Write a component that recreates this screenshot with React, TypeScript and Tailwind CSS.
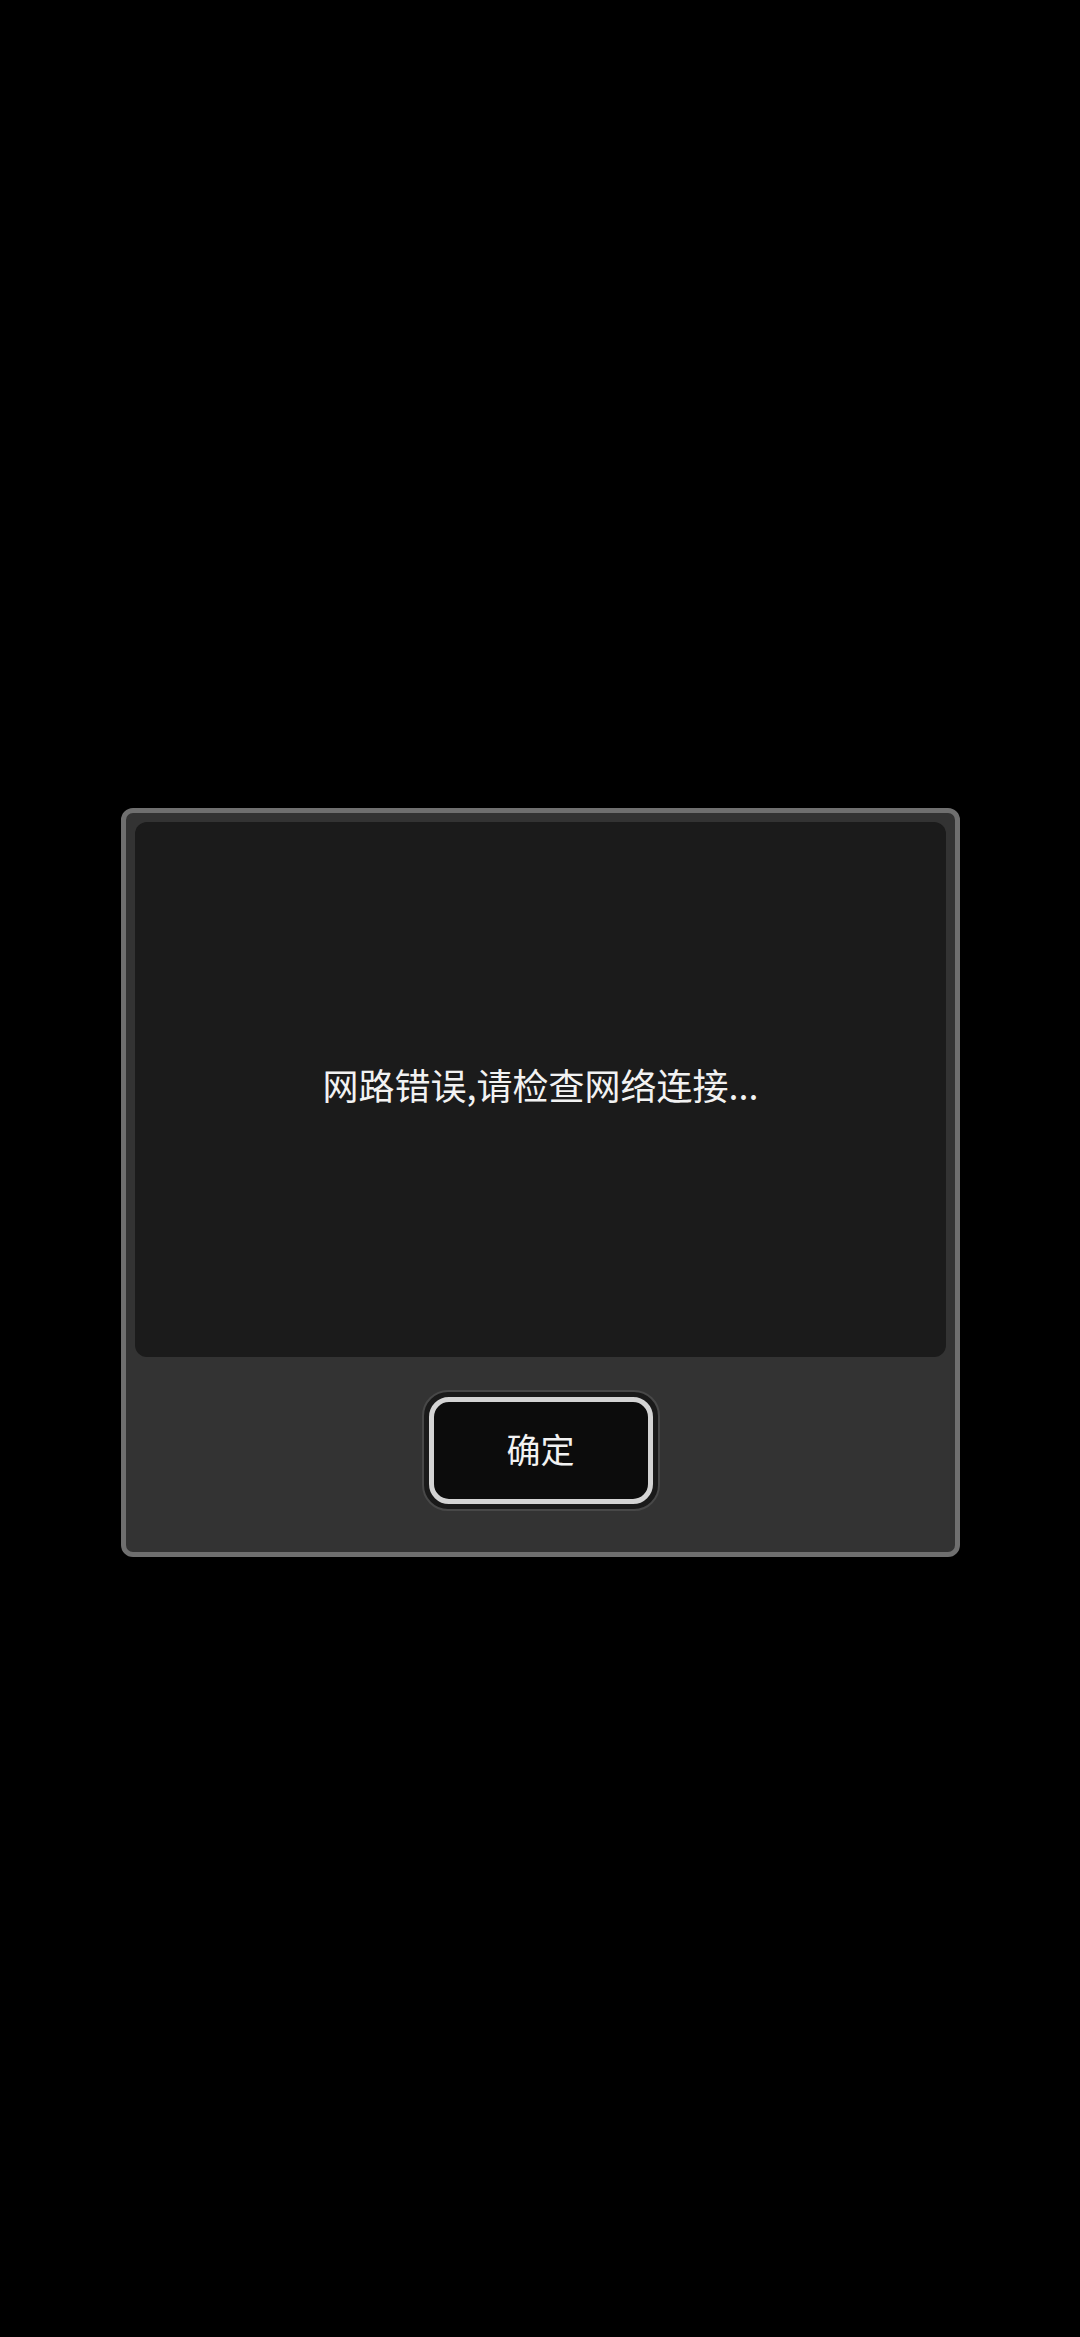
import React from "react";

export default function App() {
  return (
    <div
      className="w-[1080px] h-[2337px] bg-black pt-[808px]"
      style={{ fontFamily: '"Noto Sans CJK SC", "Noto Sans", sans-serif' }}
    >
      <div className="ml-[121px] w-[839px] h-[749px] rounded-[12px] border-[5px] border-[#6f6f6f] bg-[#333333] p-[9px] flex flex-col">
        <div className="h-[535px] rounded-[12px] bg-[#1b1b1b] flex items-center justify-center pb-[11px]">
          <span className="text-[36px] leading-none text-[#f2f2f2]">
            网路错误,请检查网络连接...
          </span>
        </div>
        <div className="flex-1 flex items-center justify-center">
          <div className="w-[238px] h-[121px] rounded-[26px] bg-[#1a1a1a] border-[2px] border-[#484848] p-[5px] flex">
            <button className="flex-1 rounded-[20px] border-[5px] border-[#d4d4d4] bg-[#0c0c0c] flex items-center justify-center text-[34px] leading-none text-[#f2f2f2] pb-[2px]">
              确定
            </button>
          </div>
        </div>
      </div>
    </div>
  );
}
